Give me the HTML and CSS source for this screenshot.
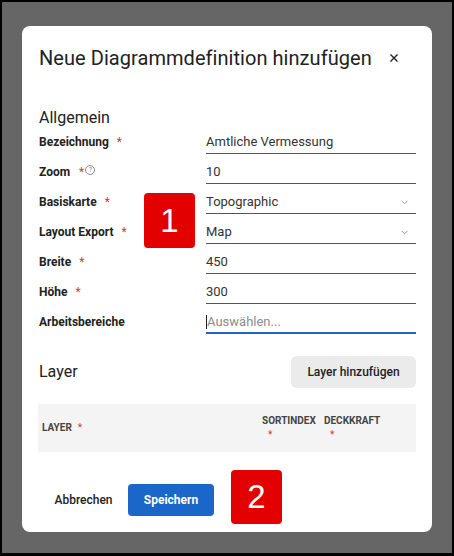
FILE: index.html
```html
<!DOCTYPE html>
<html lang="de">
<head>
<meta charset="utf-8">
<title>Neue Diagrammdefinition hinzufügen</title>
<link rel="stylesheet" href="styles.css">
</head>
<body>
<div class="screen">
  <div class="dialog">
    <div class="title-row">
      <h1 class="title">Neue Diagrammdefinition hinzufügen</h1>
      <span class="close" aria-label="Schließen">
        <svg width="8" height="8" viewBox="0 0 8 8"><path d="M0.5 0.5L7.5 7.5M7.5 0.5L0.5 7.5" stroke="#222" stroke-width="1.4" fill="none"/></svg>
      </span>
    </div>

    <h2 class="section">Allgemein</h2>

    <div class="form">
      <div class="row">
        <div class="label">Bezeichnung<span class="req">*</span></div>
        <div class="field">Amtliche Vermessung</div>
      </div>
      <div class="row">
        <div class="label">Zoom<span class="req req-tight">*</span><span class="help">?</span></div>
        <div class="field">10</div>
      </div>
      <div class="row">
        <div class="label">Basiskarte<span class="req">*</span></div>
        <div class="field select">Topographic
          <svg class="chev" width="7" height="5" viewBox="0 0 7 5"><path d="M0.5 0.8L3.5 3.8L6.5 0.8" stroke="#9a9a9a" stroke-width="1" fill="none"/></svg>
        </div>
      </div>
      <div class="row">
        <div class="label">Layout Export<span class="req">*</span></div>
        <div class="field select">Map
          <svg class="chev" width="7" height="5" viewBox="0 0 7 5"><path d="M0.5 0.8L3.5 3.8L6.5 0.8" stroke="#9a9a9a" stroke-width="1" fill="none"/></svg>
        </div>
      </div>
      <div class="row">
        <div class="label">Breite<span class="req">*</span></div>
        <div class="field">450</div>
      </div>
      <div class="row">
        <div class="label">Höhe<span class="req">*</span></div>
        <div class="field">300</div>
      </div>
      <div class="row last">
        <div class="label">Arbeitsbereiche</div>
        <div class="field focused"><span class="caret"></span><span class="placeholder">Auswählen...</span></div>
      </div>
    </div>

    <div class="layer-head">
      <h2 class="section">Layer</h2>
      <button class="btn-gray">Layer hinzufügen</button>
    </div>

    <div class="table-head">
      <div class="th th-layer">LAYER<span class="req">*</span></div>
      <div class="th">SORTINDEX<span class="req block">*</span></div>
      <div class="th">DECKKRAFT<span class="req block">*</span></div>
    </div>

    <div class="footer">
      <button class="btn-text">Abbrechen</button>
      <button class="btn-primary">Speichern</button>
    </div>

    <div class="marker marker-1">1</div>
    <div class="marker marker-2">2</div>
  </div>
</div>
</body>
</html>
```

FILE: styles.css
```css
* { box-sizing: border-box; }

html, body {
  margin: 0;
  padding: 0;
  background: #000;
}

body {
  width: 454px;
  height: 556px;
  padding: 2px 2px 3px 2px;
  font-family: Roboto, "Liberation Sans", Arial, sans-serif;
}

.screen {
  width: 450px;
  height: 551px;
  background: #666;
  padding: 24px 20px 0 20px;
}

.dialog {
  position: relative;
  width: 410px;
  height: 506px;
  background: #fff;
  border-radius: 8px;
  padding: 20px 16px 16px 17px;
  display: flex;
  flex-direction: column;
}

.title-row {
  display: flex;
  align-items: center;
  justify-content: space-between;
  height: 24px;
}

.title {
  margin: 0;
  font-size: 20px;
  line-height: 24px;
  font-weight: 400;
  color: #222;
  letter-spacing: 0.05px;
}

.close {
  width: 24px;
  height: 24px;
  display: flex;
  align-items: center;
  justify-content: center;
  margin-right: 10px;
}

.section {
  margin: 0;
  font-size: 16px;
  line-height: 20px;
  font-weight: 400;
  color: #222;
}

.title-row + .section {
  margin-top: 38px;
}

.form {
  display: flex;
  flex-direction: column;
}

.row {
  display: grid;
  grid-template-columns: 167px 210px;
  height: 30px;
}

.row.last {
  height: 26px;
}

.label {
  padding-top: 3px;
  line-height: 22px;
  font-size: 12px;
  font-weight: 700;
  color: #222;
  display: flex;
  align-items: center;
  height: 25px;
}

.req {
  color: #d23a3a;
  margin-left: 8px;
  font-weight: 400;
  font-size: 12px;
}

.req-tight {
  margin-left: 9px;
}

.help {
  display: inline-flex;
  align-items: center;
  justify-content: center;
  width: 10px;
  height: 10px;
  border: 1px solid #8a8a8a;
  border-radius: 50%;
  font-size: 7px;
  line-height: 1;
  color: #8a8a8a;
  font-weight: 400;
  margin-left: 1px;
  margin-top: -4px;
}

.field {
  height: 26px;
  padding-top: 3px;
  line-height: 22px;
  font-size: 13px;
  color: #333;
  border-bottom: 1px solid #555;
  display: flex;
  align-items: center;
}

.field.select {
  justify-content: space-between;
}

.chev {
  margin-right: 8px;
}

.field.focused {
  border-bottom: 2px solid #1a66c9;
}

.caret {
  display: inline-block;
  width: 1px;
  height: 14px;
  background: #222;
}

.placeholder {
  color: #8c8c8c;
}

.layer-head {
  display: flex;
  justify-content: space-between;
  align-items: center;
  margin-top: 22px;
  height: 32px;
}

.btn-gray {
  width: 125px;
  height: 32px;
  border: none;
  border-radius: 6px;
  background: #ebebeb;
  font-family: inherit;
  font-size: 12px;
  font-weight: 500;
  color: #222;
  padding: 0;
}

.table-head {
  margin-top: 16px;
  height: 48px;
  width: 378px;
  margin-left: -1px;
  background: #f4f4f4;
  display: grid;
  grid-template-columns: 220px 62px 96px;
  align-items: center;
}

.th {
  padding-left: 4px;
  font-size: 10px;
  line-height: 14px;
  font-weight: 700;
  color: #444;
}

.th .req {
  margin-left: 6px;
  font-size: 10px;
}

.th .req.block {
  display: block;
}

.footer {
  margin-top: 32px;
  display: flex;
  align-items: center;
  height: 32px;
}

.btn-text {
  height: 32px;
  width: 90px;
  margin-left: -1px;
  border: none;
  background: transparent;
  font-family: inherit;
  font-size: 12px;
  font-weight: 500;
  color: #222;
  padding: 0 0 0 1px;
}

.btn-primary {
  height: 32px;
  width: 86px;
  border: none;
  border-radius: 4px;
  background: #1a66c9;
  color: #fff;
  font-family: inherit;
  font-size: 12px;
  font-weight: 700;
  padding: 0;
}

.marker {
  position: absolute;
  width: 51px;
  background: #e30000;
  color: #fff;
  border-radius: 4px;
  font-family: "Liberation Sans", Arial, sans-serif;
  font-size: 33px;
  display: flex;
  align-items: center;
  justify-content: center;
}

.marker-1 {
  left: 122px;
  top: 167px;
  height: 55px;
}

.marker-2 {
  left: 209px;
  top: 444px;
  height: 54px;
}
```
